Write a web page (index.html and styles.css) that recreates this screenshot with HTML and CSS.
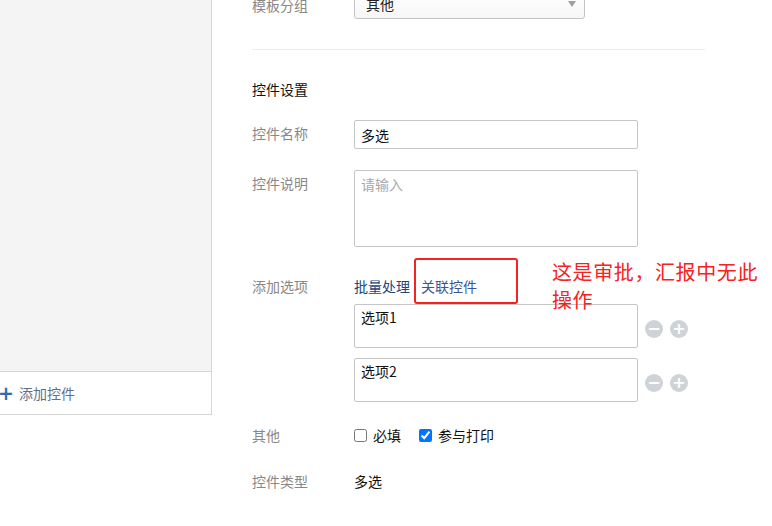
FILE: index.html
```html
<!DOCTYPE html>
<html lang="zh">
<head>
<meta charset="utf-8">
<link rel="stylesheet" href="styles.css">
</head>
<body>
<div class="page">
  <aside class="sidebar">
    <div class="list"></div>
    <div class="add"><span class="plus">+</span><span class="add-text">添加控件</span></div>
  </aside>
  <main class="main">
    <div class="row row-select">
      <div class="label">模板分组</div>
      <div class="select"><span>其他</span><span class="caret"></span></div>
    </div>
    <div class="divider"></div>
    <div class="section-title">控件设置</div>
    <div class="row row-name">
      <div class="label">控件名称</div>
      <div class="input">多选</div>
    </div>
    <div class="row row-desc">
      <div class="label">控件说明</div>
      <div class="textarea placeholder">请输入</div>
    </div>
    <div class="row row-options">
      <div class="label">添加选项</div>
      <div class="options">
        <div class="links"><span class="link">批量处理</span><span class="link link2">关联控件</span></div>
        <div class="option"><div class="opt-box">选项1</div><span class="circle">−</span><span class="circle">+</span></div>
        <div class="option option2"><div class="opt-box">选项2</div><span class="circle">−</span><span class="circle">+</span></div>
      </div>
    </div>
    <div class="row row-other">
      <div class="label">其他</div>
      <label class="check"><input type="checkbox">必填</label>
      <label class="check"><input type="checkbox" checked>参与打印</label>
    </div>
    <div class="row row-type">
      <div class="label">控件类型</div>
      <div class="value">多选</div>
    </div>
  </main>
  <div class="mark-box"></div>
  <div class="mark-note">这是审批，汇报中无此<br>操作</div>
</div>
</body>
</html>
```
FILE: styles.css
```css
* { box-sizing: border-box; }
html, body { margin: 0; padding: 0; background: #fff; }
body {
  font-family: "Noto Sans CJK SC", "Liberation Sans", sans-serif;
  font-size: 14px;
  color: #222;
  width: 772px;
  height: 526px;
  overflow: hidden;
}
.page { position: relative; display: flex; align-items: flex-start; }
.sidebar {
  width: 212px;
  height: 415px;
  display: flex;
  flex-direction: column;
  border-right: 1px solid #d6d6d6;
  border-bottom: 1px solid #d6d6d6;
}
.list { flex: 1; background: #f4f4f4; }
.add {
  height: 43px;
  border-top: 1px solid #d6d6d6;
  display: flex;
  align-items: center;
  background: #fff;
}
.plus {
  color: #2c6cb3;
  font-family: "DejaVu Sans", sans-serif;
  font-size: 19px;
  font-weight: bold;
  line-height: 20px;
  margin-left: -2px;
  width: 21px;
}
.add-text { color: #5f6f8e; line-height: 20px; }

.main { width: 493px; padding-left: 40px; margin-top: -12px; }
.row { display: flex; align-items: flex-start; }
.label { width: 102px; flex: none; color: #888; line-height: 20px; }

.row-select .label { padding-top: 7px; }
.select {
  width: 231px;
  height: 31px;
  border: 1px solid #c4c4c4;
  border-radius: 3px;
  background: linear-gradient(#fff, #f7f7f7);
  display: flex;
  align-items: center;
  justify-content: space-between;
  padding: 0 8px 0 11px;
  line-height: 20px;
}
.caret {
  width: 0; height: 0;
  border-left: 4px solid transparent;
  border-right: 4px solid transparent;
  border-top: 6px solid #a0a0a0;
}
.divider { height: 1px; background: #ececec; margin-top: 30px; width: 453px; }
.section-title { margin-top: 29px; line-height: 20px; color: #111; }

.row-name { margin-top: 21px; }
.row-name .label { padding-top: 3px; }
.input {
  width: 284px;
  height: 29px;
  border: 1px solid #c6c6c6;
  border-radius: 2px;
  padding: 4px 6px;
  line-height: 20px;
  color: #111;
}
.row-desc { margin-top: 21px; }
.row-desc .label { padding-top: 3px; }
.textarea {
  width: 284px;
  height: 77px;
  border: 1px solid #c6c6c6;
  border-radius: 2px;
  padding: 3px 6px;
  line-height: 20px;
}
.placeholder { color: #a9a9a9; }

.row-options { margin-top: 29px; }
.options { display: flex; flex-direction: column; }
.links { display: flex; gap: 11px; line-height: 20px; }
.link { color: #23457a; }
.link2 { color: #3d5597; }
.option { display: flex; align-items: center; margin-top: 8px; }
.option2 { margin-top: 10px; }
.opt-box {
  width: 284px;
  height: 44px;
  border: 1px solid #c6c6c6;
  border-radius: 2px;
  padding: 2px 6px;
  line-height: 20px;
  color: #111;
}
.circle {
  width: 18px;
  height: 18px;
  border-radius: 50%;
  background: #cfd2d7;
  color: #fff;
  font-family: "DejaVu Sans", sans-serif;
  font-weight: bold;
  font-size: 16px;
  line-height: 18px;
  text-align: center;
  margin-left: 7px;
  margin-top: 6px;
}

.row-other { margin-top: 23px; align-items: center; line-height: 20px; }
.check { display: flex; align-items: center; margin-right: 18px; color: #111; }
.check input { margin: 0 6px 0 0; width: 13px; height: 13px; }
.row-type { margin-top: 26px; line-height: 20px; }
.value { color: #111; }

.mark-box {
  position: absolute;
  left: 414px;
  top: 258px;
  width: 104px;
  height: 46px;
  border: 2px solid #f52222;
  border-radius: 3px;
}
.mark-note {
  position: absolute;
  left: 552px;
  top: 258px;
  color: #f52222;
  font-size: 20px;
  letter-spacing: 0.6px;
  line-height: 28px;
}
```
